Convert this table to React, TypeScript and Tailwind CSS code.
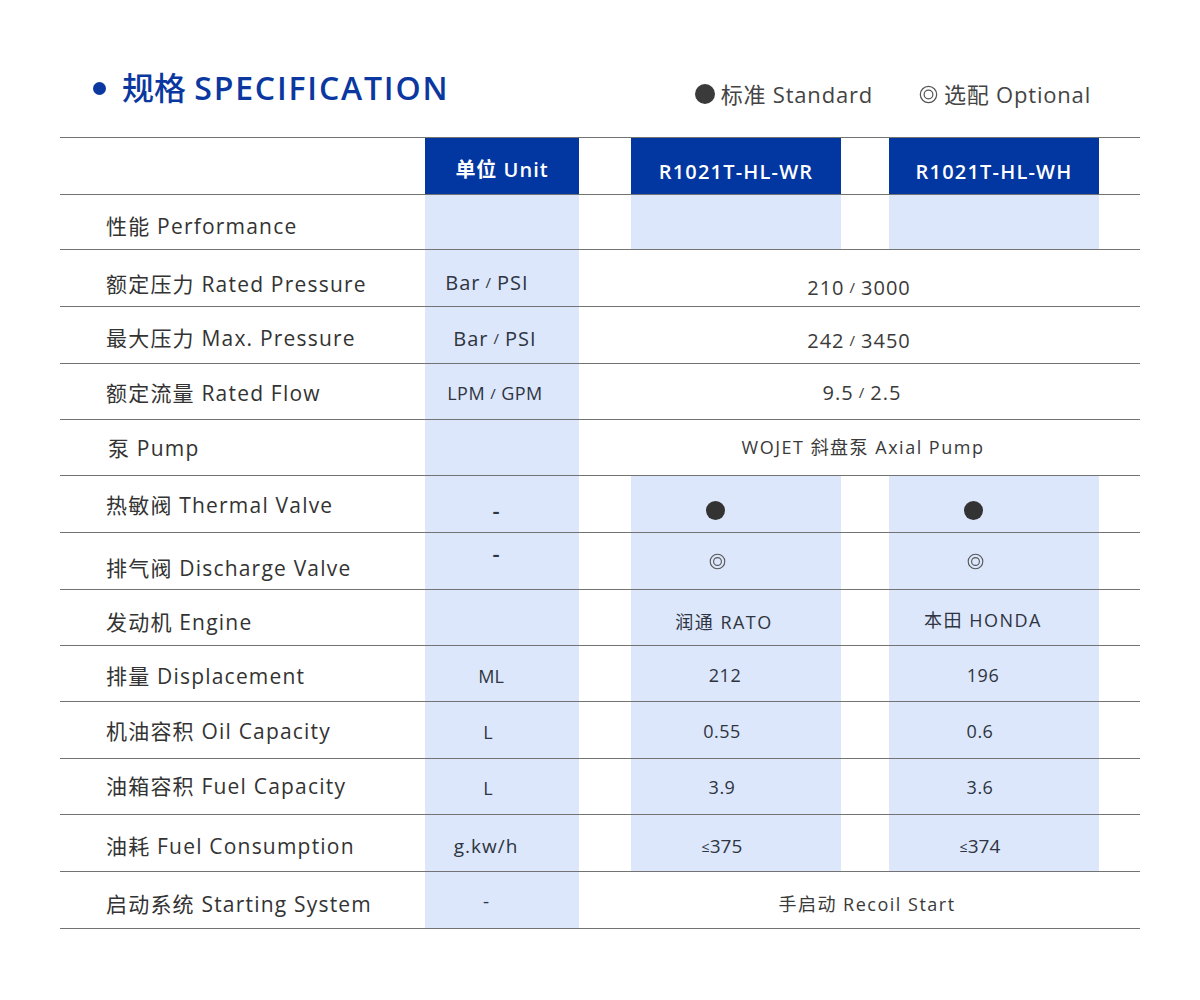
import React from "react";

const GRID =
  "grid grid-cols-[365px_154px_52px_210px_48px_210px_40px] border-b border-[#737373]";
const BLUE = "bg-[#dce7fb]";

function Dot({ cls = "" }: { cls?: string }) {
  return <span className={"inline-block w-[19px] h-[19px] rounded-full bg-[#333] " + cls} />;
}

function Opt({ size = 17, color = "#555" }: { size?: number; color?: string }) {
  return (
    <svg width={size} height={size} viewBox="0 0 20 20" className="inline-block">
      <circle cx="10" cy="10" r="8.6" fill="none" stroke={color} strokeWidth="1.3" />
      <circle cx="10" cy="10" r="4.6" fill="none" stroke={color} strokeWidth="1.3" />
    </svg>
  );
}

const Slash = () => <span className="text-[15px] mx-[5px]">/</span>;

type Row = {
  label: string;
  h: string;
  lc: string;
  unit?: React.ReactNode;
  uc?: string;
  merged?: React.ReactNode;
  mc?: string;
  wr?: React.ReactNode;
  wrc?: string;
  wh?: React.ReactNode;
  whc?: string;
};

const rows: Row[] = [
  { label: "性能 Performance", h: "h-[55px]", lc: "pt-[9px]", wr: null, wh: null, wrc: "pr-[28px]", whc: "pr-[28px]" },
  {
    label: "额定压力 Rated Pressure",
    h: "h-[57px]",
    lc: "pt-[14px]",
    unit: (
      <>
        Bar<Slash />PSI
      </>
    ),
    uc: "pt-[9px] pr-[30px] text-[20px] tracking-[1px]",
    merged: (
      <>
        210<Slash />3000
      </>
    ),
    mc: "pt-[19px] text-[20px] tracking-[1px]",
  },
  {
    label: "最大压力 Max. Pressure",
    h: "h-[57px]",
    lc: "pt-[8px]",
    unit: (
      <>
        Bar<Slash />PSI
      </>
    ),
    uc: "pt-[7px] pr-[14px] text-[20px] tracking-[1px]",
    merged: (
      <>
        242<Slash />3450
      </>
    ),
    mc: "pt-[11px] text-[20px] tracking-[1px]",
  },
  {
    label: "额定流量 Rated Flow",
    h: "h-[56px]",
    lc: "pt-[4px]",
    unit: (
      <>
        LPM<Slash />GPM
      </>
    ),
    uc: "pt-[4px] pr-[14px] text-[18px] tracking-[0.5px]",
    merged: (
      <>
        9.5<Slash />2.5
      </>
    ),
    mc: "pt-[2px] text-[20px] tracking-[1px] pl-[6px]",
  },
  {
    label: "泵 Pump",
    h: "h-[56px]",
    lc: "pt-[2px] pl-[48px]",
    unit: null,
    uc: "pr-[22px]",
    merged: <>WOJET 斜盘泵 Axial Pump</>,
    mc: "pt-[0px] text-[18px] tracking-[1.5px] pl-[8px]",
  },
  {
    label: "热敏阀 Thermal Valve",
    h: "h-[57px]",
    lc: "pt-[4px]",
    unit: "-",
    uc: "pt-[12px] pr-[12px] text-[22px] font-semibold",
    wr: <Dot />,
    wrc: "pt-[13px] pr-[42px]",
    wh: <Dot />,
    whc: "pt-[13px] pr-[42px]",
  },
  {
    label: "排气阀 Discharge Valve",
    h: "h-[57px]",
    lc: "pt-[16px]",
    unit: "-",
    uc: "pb-[15px] pr-[12px] text-[22px] font-semibold",
    wr: <Opt />,
    wrc: "pt-[1px] pr-[38px]",
    wh: <Opt />,
    whc: "pt-[1px] pr-[38px]",
  },
  {
    label: "发动机 Engine",
    h: "h-[56px]",
    lc: "pt-[10px]",
    unit: null,
    uc: "pr-[22px]",
    wr: <>润通 RATO</>,
    wrc: "pt-[10px] pr-[24px] text-[18px] tracking-[1.5px]",
    wh: <>本田 HONDA</>,
    whc: "pt-[6px] pr-[22px] text-[18px] tracking-[1.5px]",
  },
  {
    label: "排量 Displacement",
    h: "h-[56px]",
    lc: "pt-[6px]",
    unit: "ML",
    uc: "pt-[6px] pr-[22px] text-[18px]",
    wr: "212",
    wrc: "pt-[4px] pr-[22px] text-[18px] tracking-[0.5px]",
    wh: "196",
    whc: "pt-[4px] pr-[22px] text-[18px] tracking-[0.5px]",
  },
  {
    label: "机油容积 Oil Capacity",
    h: "h-[57px]",
    lc: "pt-[3px]",
    unit: "L",
    uc: "pt-[5px] pr-[28px] text-[18px]",
    wr: "0.55",
    wrc: "pt-[3px] pr-[28px] text-[18px] tracking-[0.5px]",
    wh: "0.6",
    whc: "pt-[3px] pr-[28px] text-[18px] tracking-[0.5px]",
  },
  {
    label: "油箱容积 Fuel Capacity",
    h: "h-[56px]",
    lc: "pt-[0px]",
    unit: "L",
    uc: "pt-[4px] pr-[28px] text-[18px]",
    wr: "3.9",
    wrc: "pt-[2px] pr-[28px] text-[18px] tracking-[0.5px]",
    wh: "3.6",
    whc: "pt-[2px] pr-[28px] text-[18px] tracking-[0.5px]",
  },
  {
    label: "油耗 Fuel Consumption",
    h: "h-[57px]",
    lc: "pt-[7px]",
    unit: "g.kw/h",
    uc: "pt-[7px] pr-[32px] text-[19px] tracking-[1px]",
    wr: (
      <>
        <span className="text-[14px]">≤</span>375
      </>
    ),
    wrc: "pt-[7px] pr-[28px] text-[19px]",
    wh: (
      <>
        <span className="text-[14px]">≤</span>374
      </>
    ),
    whc: "pt-[7px] pr-[28px] text-[19px]",
  },
  {
    label: "启动系统 Starting System",
    h: "h-[57px]",
    lc: "pt-[9px] pl-[44px]",
    unit: "-",
    uc: "pt-[3px] pr-[32px] text-[19px]",
    merged: <>手启动 Recoil Start</>,
    mc: "pt-[9px] text-[18px] tracking-[1.5px] pl-[16px]",
  },
];

export default function App() {
  return (
    <div className="w-[1200px] h-[1000px] bg-white font-['Open_Sans','Noto_Sans_CJK_SC',sans-serif] text-[#333]">
      <div className="px-[60px]">
        {/* Header */}
        <div className="h-[137px] flex justify-between items-start pt-[68px]">
          <div className="flex items-center h-[40px] ml-[33px] gap-[16px]">
            <span className="w-[13px] h-[13px] rounded-full bg-[#0b38a0]" />
            <span className="text-[32px] font-medium text-[#0b38a0] leading-none">
              规格 <span className="font-semibold tracking-[1.8px]">SPECIFICATION</span>
            </span>
          </div>
          <div className="flex items-center gap-[46px] mt-[12px] mr-[49px] text-[22px] tracking-[0.8px] text-[#444] leading-[28px]">
            <div className="flex items-center gap-[6px]">
              <span className="w-[20px] h-[20px] rounded-full bg-[#3a3a3a]" />
              <span>标准 Standard</span>
            </div>
            <div className="flex items-center gap-[6px]">
              <Opt size={19} color="#555" />
              <span>选配 Optional</span>
            </div>
          </div>
        </div>

        {/* Table */}
        <div className="border-t border-[#737373]">
          <div className={GRID + " h-[57px]"}>
            <div />
            <div className="flex items-center justify-center bg-[#0236a0] text-white text-[20px] font-semibold tracking-[1px] pt-[8px]">
              单位 Unit
            </div>
            <div />
            <div className="flex items-center justify-center bg-[#0236a0] text-white text-[20px] font-semibold tracking-[1.2px] pt-[11px]">
              R1021T-HL-WR
            </div>
            <div />
            <div className="flex items-center justify-center bg-[#0236a0] text-white text-[20px] font-semibold tracking-[1.2px] pt-[11px]">
              R1021T-HL-WH
            </div>
            <div />
          </div>

          {rows.map((r, i) => (
            <div key={i} className={GRID + " " + r.h}>
              <div className={"flex items-center pl-[46px] text-[21px] tracking-[1.2px] text-[#333] " + r.lc}>
                {r.label}
              </div>
              <div className={"flex items-center justify-center text-[#2e3440] " + BLUE + " " + (r.uc ?? "")}>
                {r.unit}
              </div>
              {r.merged !== undefined ? (
                <div className={"col-span-5 flex items-center justify-center text-[#3a3a3a] " + (r.mc ?? "")}>
                  {r.merged}
                </div>
              ) : (
                <>
                  <div />
                  <div className={"flex items-center justify-center text-[#2e3440] " + BLUE + " " + (r.wrc ?? "")}>
                    {r.wr}
                  </div>
                  <div />
                  <div className={"flex items-center justify-center text-[#2e3440] " + BLUE + " " + (r.whc ?? "")}>
                    {r.wh}
                  </div>
                  <div />
                </>
              )}
            </div>
          ))}
        </div>
      </div>
    </div>
  );
}
